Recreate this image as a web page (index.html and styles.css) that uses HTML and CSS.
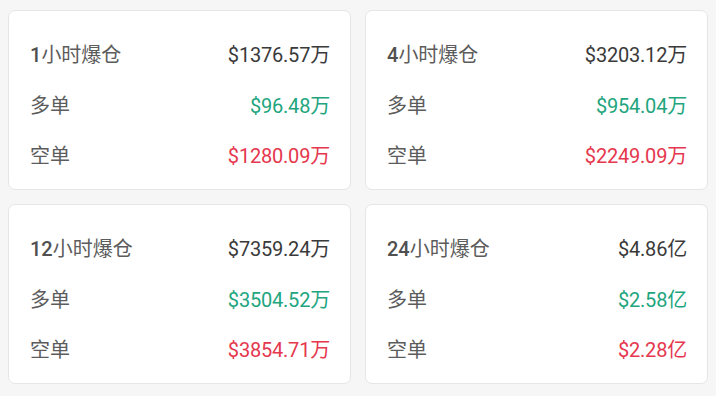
FILE: index.html
```html
<!DOCTYPE html>
<html lang="zh">
<head>
<meta charset="utf-8">
<link rel="stylesheet" href="styles.css">
</head>
<body>
<div class="grid">
  <div class="card">
    <div class="row"><span class="label"><b class="num">1</b>小时爆仓</span><span class="val">$1376.57万</span></div>
    <div class="row"><span class="label">多单</span><span class="val up">$96.48万</span></div>
    <div class="row"><span class="label">空单</span><span class="val down">$1280.09万</span></div>
  </div>
  <div class="card">
    <div class="row"><span class="label"><b class="num">4</b>小时爆仓</span><span class="val">$3203.12万</span></div>
    <div class="row"><span class="label">多单</span><span class="val up">$954.04万</span></div>
    <div class="row"><span class="label">空单</span><span class="val down">$2249.09万</span></div>
  </div>
  <div class="card">
    <div class="row"><span class="label"><b class="num">12</b>小时爆仓</span><span class="val">$7359.24万</span></div>
    <div class="row"><span class="label">多单</span><span class="val up">$3504.52万</span></div>
    <div class="row"><span class="label">空单</span><span class="val down">$3854.71万</span></div>
  </div>
  <div class="card">
    <div class="row"><span class="label"><b class="num">24</b>小时爆仓</span><span class="val">$4.86亿</span></div>
    <div class="row"><span class="label">多单</span><span class="val up">$2.58亿</span></div>
    <div class="row"><span class="label">空单</span><span class="val down">$2.28亿</span></div>
  </div>
</div>
</body>
</html>
```

FILE: styles.css
```css
html, body {
  margin: 0;
  padding: 0;
  background: #f6f6f6;
}
body {
  padding: 10px 8px;
  font-family: Roboto, "Noto Sans CJK SC", sans-serif;
  font-size: 20px;
}
.grid {
  display: grid;
  grid-template-columns: 1fr 1fr;
  gap: 14px;
}
.card {
  background: #fff;
  border: 1px solid #e6e6e6;
  border-radius: 7px;
  height: 180px;
  box-sizing: border-box;
  padding: 17px 20px 9px 21px;
  display: flex;
  flex-direction: column;
}
.row {
  height: 51px;
  display: flex;
  align-items: center;
  justify-content: space-between;
}
.label {
  color: #5c5c5c;
}
.num {
  font-weight: 500;
  color: #505050;
}
.val {
  color: #3a3a3a;
  letter-spacing: -0.2px;
}
.up {
  color: #22a57e;
}
.down {
  color: #e5374d;
}
```
